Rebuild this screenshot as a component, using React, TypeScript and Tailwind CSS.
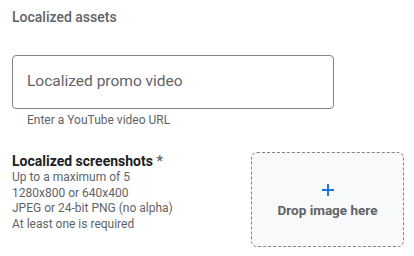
export default function App() {
  return (
    <div
      className="w-[414px] h-[256px] bg-white overflow-hidden"
      style={{ fontFamily: 'Roboto, "Liberation Sans", sans-serif' }}
    >
      <div className="px-3 pt-[7px]">
        <h2 className="text-[14px] leading-5 font-medium text-[#5f6368]">Localized assets</h2>

        <div className="mt-[28px] w-[322px] h-[54px] border border-[#80868b] rounded-[4px] flex items-center px-[14px]">
          <span className="text-[15.5px] text-[#5f6368]">Localized promo video</span>
        </div>
        <p className="mt-[3px] pl-[15px] text-[12px] leading-4 text-[#5f6368]">
          Enter a YouTube video URL
        </p>

        <div className="mt-[24px] flex justify-between">
          <div>
            <h3 className="text-[14px] leading-[18px] font-bold text-[#202124]">
              Localized screenshots <span className="text-[#5f6368]">*</span>
            </h3>
            <ul className="text-[12px] leading-[15.5px] text-[#5f6368]">
              <li>Up to a maximum of 5</li>
              <li>1280x800 or 640x400</li>
              <li>JPEG or 24-bit PNG (no alpha)</li>
              <li>At least one is required</li>
            </ul>
          </div>
          <div className="mr-[-2px] w-[153px] h-[95px] border border-dashed border-[#80868b] rounded-[6px] bg-[#f8f9fa] flex flex-col items-center justify-center gap-[5px] pt-[1px]">
            <svg width="14" height="14" viewBox="0 0 14 14" className="block">
              <path d="M7 1v12M1 7h12" stroke="#1a73e8" strokeWidth="2" />
            </svg>
            <span className="text-[13.5px] leading-4 font-bold text-[#5f6368]">Drop image here</span>
          </div>
        </div>
      </div>
    </div>
  );
}
